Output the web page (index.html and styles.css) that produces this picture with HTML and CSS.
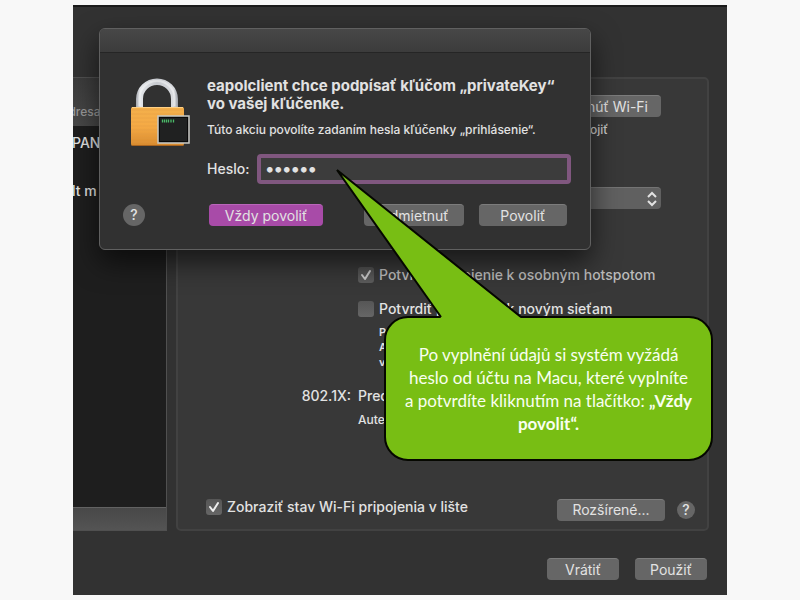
FILE: index.html
```html
<!DOCTYPE html>
<html lang="sk">
<head>
<meta charset="utf-8">
<title>Wi-Fi</title>
<link rel="stylesheet" href="styles.css">
</head>
<body>
<main class="window">
  <div class="content">
    <aside class="sidebar">
      <div class="sidebar-head">Adresa</div>
      <ul class="networks">
        <li>PAN</li>
        <li>lt m</li>
      </ul>
      <div class="sidebar-foot"></div>
    </aside>
    <section class="panel">
      <div class="form">
        <div class="status"><button class="btn" type="button">Vypnúť Wi-Fi</button></div>
        <p class="small status-note">Wi-Fi sa nedá pripojiť</p>
        <select class="network" aria-label="Názov siete"><option></option></select>
        <label class="check auto"><input type="checkbox"><span>Automaticky pripojiť k tejto sieti</span></label>
        <label class="check dim"><input type="checkbox" checked><span>Potvrdiť pripojenie k osobným hotspotom</span></label>
        <label class="check"><input type="checkbox"><span>Potvrdiť pripojenie k novým sieťam</span></label>
        <p class="hint">Pripojí sa<br>Ak nie je<br>vyberte</p>
        <span class="form-label">802.1X:</span>
        <span class="form-value">Predvolené</span>
        <p class="small auth">Autentifikácia</p>
      </div>
      <div class="panel-foot">
        <label class="check"><input type="checkbox" checked><span>Zobraziť stav Wi-Fi pripojenia v lište</span></label>
        <button class="btn advanced" type="button">Rozšírené...</button>
        <button class="help help-small" type="button">?</button>
      </div>
    </section>
  </div>
  <div class="actions">
    <button class="btn" type="button">Vrátiť</button>
    <button class="btn" type="button">Použiť</button>
  </div>

  <form class="dialog" role="dialog" aria-labelledby="dialog-title">
    <div class="titlebar"></div>
    <div class="dialog-body">
      <svg class="lock" viewBox="0 0 60 70" aria-hidden="true">
        <defs>
          <linearGradient id="gold" x1="0" y1="0" x2="0" y2="1">
            <stop offset="0" stop-color="#f3b04c"/><stop offset=".5" stop-color="#f5aa45"/><stop offset="1" stop-color="#d78a2e"/>
          </linearGradient>
          <linearGradient id="steel" x1="0" y1="0" x2="1" y2="0">
            <stop offset="0" stop-color="#a5a8ae"/><stop offset=".1" stop-color="#e4e6ea"/><stop offset=".5" stop-color="#c6c9ce"/><stop offset=".9" stop-color="#dadce0"/><stop offset="1" stop-color="#9ca0a8"/>
          </linearGradient>
          <pattern id="ribs" width="54" height="4" patternUnits="userSpaceOnUse"><path d="M0 1H54" stroke="#e09a40" stroke-opacity=".45"/></pattern>
        </defs>
        <path d="M6 32V22a20.500 20 0 0 1 42 0V32H41V22a13.500 13.500 0 0 0-28 0V32z" fill="url(#steel)"/>
        <path d="M9.500 29V21a17.500 17 0 0 1 35 0V29" fill="none" stroke="#fff" stroke-opacity=".4" stroke-width="2"/>
        <rect x="1" y="30" width="53" height="39" rx="2" fill="url(#gold)"/>
        <rect x="1" y="30" width="53" height="39" rx="2" fill="url(#ribs)"/>
        <path d="M2 30.500H53" stroke="#ffd085"/>
        <path d="M2 68.500H53" stroke="#a86420"/>
        <rect x="28" y="39" width="31" height="27" fill="#202121" stroke="#c8c9c4" stroke-width="1.500"/>
        <rect x="29.500" y="40.500" width="28" height="24" fill="none" stroke="#090909"/>
        <path d="M32.500 42.500v3M34.500 42.500v3M36.500 42.500v3M38.500 42.500v3M41 42.500v3M43.500 42.500v3" stroke="#4bbb69" stroke-width="1.300" fill="none"/>
      </svg>
      <div class="dialog-main">
        <h1 id="dialog-title">eapolclient chce podpísať kľúčom „privateKey“<br>vo vašej kľúčenke.</h1>
        <p class="small">Túto akciu povolíte zadaním hesla kľúčenky „prihlásenie“.</p>
        <div class="field">
          <label for="pw">Heslo:</label>
          <input id="pw" type="password" value="heslo1" autocomplete="off">
        </div>
      </div>
    </div>
    <div class="dialog-foot">
      <button class="help" type="button">?</button>
      <button class="btn primary" type="button">Vždy povoliť</button>
      <button class="btn deny" type="button">Odmietnuť</button>
      <button class="btn allow" type="button">Povoliť</button>
    </div>
  </form>

  <div class="callout">
    <svg class="tail" viewBox="0 0 190 154" aria-hidden="true">
      <path d="M107 154V152L3 4L187 152V154z" fill="#78be14"/>
      <path d="M107 151L3 4L187 151" fill="none" stroke="#050700" stroke-width="2"/>
    </svg>
    <p>Po vyplnění údajů si systém vyžádá heslo od účtu na Macu, které vyplníte a&nbsp;potvrdíte kliknutím na tlačítko: <strong>„Vždy povolit“.</strong></p>
  </div>
</main>
</body>
</html>
```
FILE: styles.css
```css
* { box-sizing: border-box; }

body {
  margin: 0;
  padding: 5px 73px;
  min-height: 100vh;
  display: flex;
  background: #f8f8f8;
  color: #e2e2e2;
  font: 500 14px/18px Inter, "Liberation Sans", sans-serif;
}

h1, p, ul { margin: 0; padding: 0; }
button, input, select { font: inherit; color: inherit; }

.window {
  position: relative;
  flex: 1;
  display: flex;
  flex-direction: column;
  padding: 70px 0 15px;
  overflow: hidden;
  background: #323232;
  border-top: 2px solid #1b1b1b;
}

.content {
  flex: 1;
  display: grid;
  grid-template-columns: 94px 1fr;
  gap: 9px;
  padding-right: 18px;
}

.sidebar {
  display: flex;
  flex-direction: column;
  background: #1e1e1e;
  border: solid #505050;
  border-width: 1px 1px 1px 0;
}

.sidebar-head {
  height: 48px;
  padding: 25px 0 0;
  text-indent: -13px;
  font-size: 12px;
  color: #999;
  background: linear-gradient(#3c3c3c, #484848);
}

.networks { flex: 1; list-style: none; text-indent: -1px; }
.networks li { height: 48px; padding-top: 8px; }

.sidebar-foot {
  height: 23px;
  background: linear-gradient(#484848, #545454);
  border-top: 1px solid #626262;
}

.panel {
  display: flex;
  flex-direction: column;
  justify-content: space-between;
  background: #383838;
  border: 2px solid #424242;
  border-radius: 5px;
}

.form {
  display: grid;
  grid-template-columns: 173px 1fr;
  column-gap: 7px;
  padding: 16px 46px 0 0;
}
.form > * { grid-column: 2; }

.btn {
  height: 22px;
  padding: 0 13px;
  border: 0;
  border-top: 1px solid #7c7c7c;
  border-radius: 4px;
  background: #666;
  font-weight: 400;
  line-height: 20px;
  white-space: nowrap;
}

.small { font-size: 12px; }
.status { text-align: right; height: 22px; }
.status-note { padding: 4px 53px 0 0; text-align: right; color: #ccc; }

.network {
  appearance: none;
  height: 22px;
  margin-top: 48px;
  border: 0;
  border-top: 1px solid #747474;
  border-radius: 4px;
  background: #606060 url("data:image/svg+xml,%3Csvg xmlns='http://www.w3.org/2000/svg' width='10' height='16'%3E%3Cpath d='M1 6L5 2L9 6M1 10L5 14L9 10' fill='none' stroke='%23e2e2e2' stroke-width='2'/%3E%3C/svg%3E") no-repeat right 4px center;
}

.check { display: flex; align-items: center; gap: 5px; height: 18px; white-space: nowrap; }
.check input {
  appearance: none;
  width: 16px;
  height: 16px;
  margin: 0;
  border-radius: 3px;
  background: linear-gradient(#565656, #666);
}
.check input:checked {
  background: url("data:image/svg+xml,%3Csvg xmlns='http://www.w3.org/2000/svg' width='16' height='16'%3E%3Cpath d='M4 8L7 12L12 4' fill='none' stroke='%23eee' stroke-width='2' stroke-linecap='round' stroke-linejoin='round'/%3E%3C/svg%3E"), linear-gradient(#565656, #666);
}
.check.auto { margin: 23px 0 16px; }
.check.dim { margin-bottom: 16px; }
.dim span { color: #bbb; }
.dim input { opacity: .8; }

.hint {
  padding: 7px 0 0 21px;
  font-size: 11px;
  font-weight: 600;
  line-height: 15px;
}
.form .form-label { grid-column: 1; margin-top: 17px; text-align: right; }
.form-value { margin-top: 17px; }
.auth { margin-top: 6px; }

.panel-foot {
  display: flex;
  align-items: center;
  padding: 0 12px 8px 28px;
}
.panel-foot .check { margin-bottom: 5px; }
.advanced { width: 108px; margin: 0 12px 0 auto; }

.help {
  width: 22px;
  height: 22px;
  padding: 0;
  border: 0;
  border-radius: 50%;
  background: #666;
  line-height: 22px;
}
.help-small { width: 18px; height: 18px; line-height: 18px; }

.actions {
  display: flex;
  justify-content: flex-end;
  gap: 16px;
  padding: 27px 20px 0 0;
}
.actions .btn { width: 72px; }

.dialog {
  position: absolute;
  left: 26px;
  top: 21px;
  width: 75.2%;
  height: 222px;
  background: #313131;
  border: 1px solid #606060;
  border-radius: 6px;
  box-shadow: 0 12px 28px rgba(0, 0, 0, .6);
}
.titlebar {
  height: 24px;
  border-bottom: 1px solid #252525;
  border-radius: 5px 5px 0 0;
  background: linear-gradient(#474747, #3c3c3c);
}
.dialog-body { display: flex; gap: 17px; padding: 24px 19px 0 30px; }
.lock { width: 60px; height: 70px; flex: none; }
.dialog-main { flex: 1; }
.dialog h1 { font-size: 15px; line-height: 18px; font-weight: 700; white-space: nowrap; }
.dialog .small { margin-top: 8px; white-space: nowrap; }

.field { display: flex; align-items: center; gap: 8px; margin-top: 15px; }
.field input {
  flex: 1;
  min-width: 0;
  height: 30px;
  padding: 0 4px 2px;
  border: 4px solid #80577f;
  border-radius: 4px;
  background: #3c3c3c;
  outline: 0;
  font-size: 18px;
  font-weight: 700;
}

.dialog-foot { display: flex; align-items: center; padding: 20px 23px 0; }
.btn.primary { width: 114px; margin-left: 64px; background: #a84ba8; border-top-color: #ba66ba; }
.deny { width: 100px; margin-left: auto; }
.allow { width: 88px; margin-left: 15px; }

.callout {
  position: absolute;
  left: 311px;
  top: 309px;
  width: 329px;
  min-height: 145px;
  display: flex;
  align-items: center;
  padding: 0 14px;
  border: 2px solid #050700;
  border-radius: 24px;
  background: #78be14;
  color: #f8fff0;
  font: 17px/23px Lato, sans-serif;
  text-align: center;
}
.tail { position: absolute; left: -52px; top: -152px; width: 190px; height: 154px; }
```
